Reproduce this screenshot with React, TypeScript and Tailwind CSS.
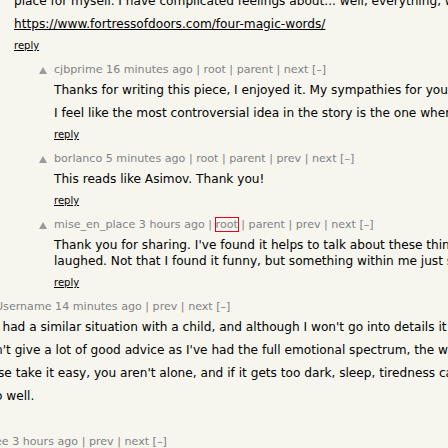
import type { ReactNode } from "react";

const meta = "text-[11.1px] leading-[14px] text-[#828282] whitespace-nowrap";
const line = "text-[12.15px] leading-[16px] text-black whitespace-nowrap";

function Arrow() {
  return (
    <div className="w-[15px] shrink-0 pt-[4px]">
      <svg width="8" height="7" viewBox="0 0 8 7" className="block">
        <polygon points="4,0 8,7 0,7" fill="#9a9a9a" />
      </svg>
    </div>
  );
}

function Reply({ hidden }: { hidden?: boolean }) {
  return (
    <div className="mt-[7px] h-[14px] text-[10px] leading-[14px] text-black">
      {!hidden && (
        <a href="#" className="underline">
          reply
        </a>
      )}
    </div>
  );
}

function Meta({
  user,
  age,
  links,
  boxed,
}: {
  user: string;
  age: string;
  links: string[];
  boxed?: string;
}) {
  return (
    <div className={meta}>
      <a href="#">{user}</a> <span>{age}</span>
      {links.map((l) => (
        <span key={l}>
          {" | "}
          <a
            href="#"
            className={l === boxed ? "outline outline-1 outline-[#e8001c]" : ""}
          >
            {l}
          </a>
        </span>
      ))}{" "}
      <a href="#">[–]</a>
    </div>
  );
}

function Comment({
  indent,
  arrow,
  children,
}: {
  indent: string;
  arrow?: boolean;
  children: ReactNode;
}) {
  return (
    <div className={`mt-[10px] flex ${indent}`}>
      {arrow && <Arrow />}
      <div className="min-w-0">{children}</div>
    </div>
  );
}

export default function App() {
  return (
    <div className="h-[448px] w-[448px] overflow-hidden bg-[#f6f6ef] font-['DejaVu_Sans',Verdana,sans-serif]">
      <div className="-mt-[7px]">
        {/* tail of the parent comment */}
        <div className="ml-[14px]">
          <p className={line}>
            place for myself. I have complicated feelings about... well, everything, which is why I wrote it.
          </p>
          <p className={`${line} mt-[7px]`}>
            <a href="#" className="underline">
              https://www.fortressofdoors.com/four-magic-words/
            </a>
          </p>
          <Reply />
        </div>

        <Comment indent="ml-[39px]" arrow>
          <Meta user="cjbprime" age="16 minutes ago" links={["root", "parent", "next"]} />
          <p className={`${line} mt-[5px]`}>
            Thanks for writing this piece, I enjoyed it. My sympathies for your loss.
          </p>
          <p className={`${line} mt-[7px]`}>
            I feel like the most controversial idea in the story is the one where the machine decides.
          </p>
          <Reply />
        </Comment>

        <Comment indent="ml-[39px]" arrow>
          <Meta user="borlanco" age="5 minutes ago" links={["root", "parent", "prev", "next"]} />
          <p className={`${line} mt-[5px]`}>This reads like Asimov. Thank you!</p>
          <Reply />
        </Comment>

        <Comment indent="ml-[39px]" arrow>
          <Meta
            user="mise_en_place"
            age="3 hours ago"
            links={["root", "parent", "prev", "next"]}
            boxed="root"
          />
          <p className={`${line} mt-[5px]`}>
            Thank you for sharing. I've found it helps to talk about these things, and I cried and
          </p>
          <p className={line}>
            laughed. Not that I found it funny, but something within me just snapped loose.
          </p>
          <Reply />
        </Comment>

        <Comment indent="-ml-[5px]">
          <Meta user="Username" age="14 minutes ago" links={["prev", "next"]} />
          <p className={`${line} mt-[5px]`}>
            I had a similar situation with a child, and although I won't go into details it
          </p>
          <p className={`${line} mt-[7px]`}>
            n't give a lot of good advice as I've had the full emotional spectrum, the worst of it.
          </p>
          <p className={`${line} mt-[7px] ml-[3px]`}>
            se take it easy, you aren't alone, and if it gets too dark, sleep, tiredness can make it worse.
          </p>
          <p className={`${line} mt-[7px]`}>o well.</p>
          <Reply hidden />
        </Comment>

        <Comment indent="-ml-[5px]">
          <Meta user="ee" age="3 hours ago" links={["prev", "next"]} />
        </Comment>
      </div>
    </div>
  );
}
